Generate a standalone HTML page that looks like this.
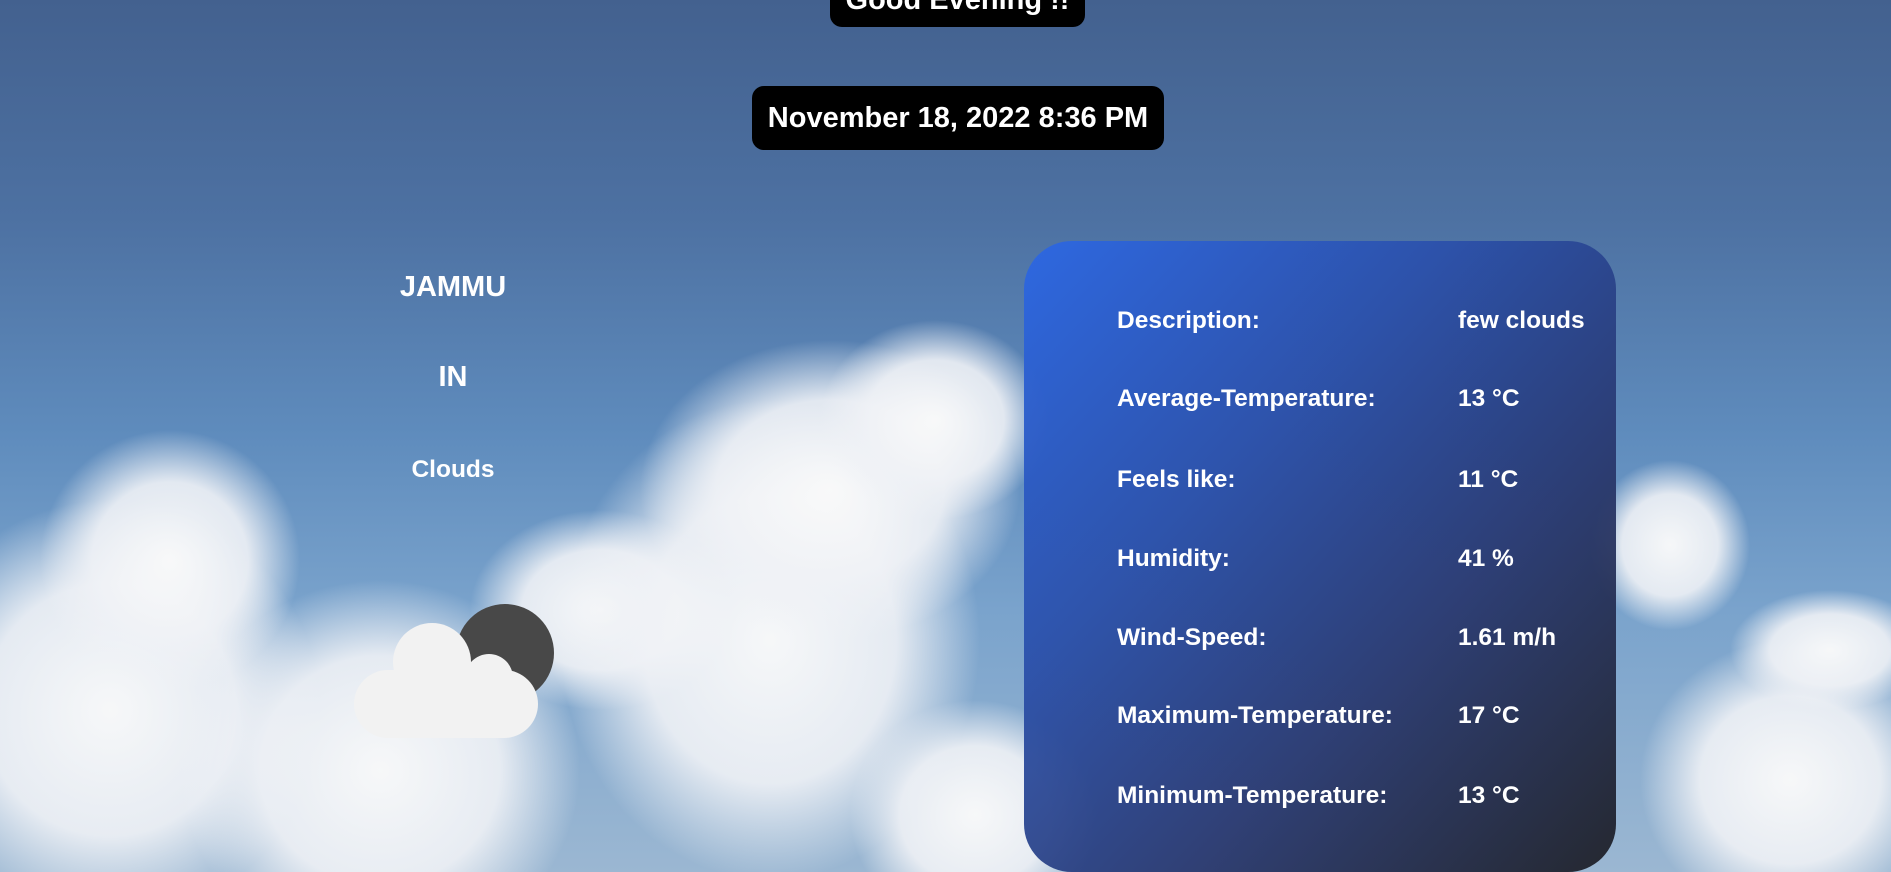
<!DOCTYPE html>
<html><head><meta charset="utf-8"><style>
html,body{margin:0;padding:0;width:1891px;height:872px;overflow:hidden}
body{position:relative;font-family:"Liberation Sans",Arial,sans-serif;font-weight:bold;color:#fff;
background:linear-gradient(180deg,#43618f 0%,#4d71a2 25%,#5f8cbd 50%,#7aa3cc 70%,#9bb7d2 100%);}
.blob{position:absolute;border-radius:50%;background:radial-gradient(closest-side,rgba(250,250,250,.97),rgba(240,242,246,.9) 60%,rgba(230,236,244,0));}
.pill{position:absolute;background:#000;border-radius:12px;text-align:center;font-size:29px;}
.loc{position:absolute;left:353px;width:200px;text-align:center;}
.card{position:absolute;left:1024px;top:241px;width:592px;height:631px;border-radius:48px;
background:linear-gradient(135deg,rgba(46,104,226,.98) 0%,rgba(43,80,170,.95) 35%,rgba(40,55,110,.93) 65%,rgba(33,35,42,.97) 100%);}
.row{position:absolute;left:1117px;font-size:24.5px;}
.val{position:absolute;left:1458px;font-size:24.5px;}
</style></head><body>
<div style="position:absolute;left:0;top:0;width:1891px;height:872px;overflow:hidden">
<div class="blob" style="left:-100px;top:500px;width:420px;height:420px"></div>
<div class="blob" style="left:40px;top:430px;width:260px;height:260px"></div>
<div class="blob" style="left:180px;top:580px;width:400px;height:380px"></div>
<div class="blob" style="left:470px;top:510px;width:260px;height:200px"></div>
<div class="blob" style="left:560px;top:400px;width:420px;height:480px"></div>
<div class="blob" style="left:640px;top:340px;width:380px;height:300px"></div>
<div class="blob" style="left:820px;top:320px;width:230px;height:200px"></div>
<div class="blob" style="left:850px;top:700px;width:250px;height:230px"></div>
<div class="blob" style="left:1590px;top:460px;width:160px;height:170px"></div>
<div class="blob" style="left:1640px;top:640px;width:300px;height:280px"></div>
<div class="blob" style="left:1730px;top:590px;width:200px;height:120px"></div>

<div class="pill" style="left:830px;top:-30px;width:255px;height:57px;line-height:60px">Good Evening !!</div>
<div class="pill" style="left:752px;top:86px;width:412px;height:64px;line-height:65px">November 18, 2022 8:36 PM</div>

<div class="loc" style="top:271px;font-size:29px">JAMMU</div>
<div class="loc" style="top:361px;font-size:29px">IN</div>
<div class="loc" style="top:456px;font-size:24.5px">Clouds</div>

<svg style="position:absolute;left:340px;top:595px" width="220" height="160" viewBox="340 595 220 160">
<circle cx="505" cy="653" r="49" fill="#484848"/>
<circle cx="432" cy="662" r="39" fill="#f2f2f2"/>
<circle cx="489" cy="678" r="24" fill="#f2f2f2"/>
<rect x="354" y="670" width="184" height="68" rx="34" fill="#f2f2f2"/>
</svg>

<div class="card"></div>
<div class="row" style="top:307px">Description:</div><div class="val" style="top:307px">few clouds</div>
<div class="row" style="top:385px">Average-Temperature:</div><div class="val" style="top:385px">13 °C</div>
<div class="row" style="top:466px">Feels like:</div><div class="val" style="top:466px">11 °C</div>
<div class="row" style="top:545px">Humidity:</div><div class="val" style="top:545px">41 %</div>
<div class="row" style="top:624px">Wind-Speed:</div><div class="val" style="top:624px">1.61 m/h</div>
<div class="row" style="top:702px">Maximum-Temperature:</div><div class="val" style="top:702px">17 °C</div>
<div class="row" style="top:782px">Minimum-Temperature:</div><div class="val" style="top:782px">13 °C</div>
</div>
</body></html>
